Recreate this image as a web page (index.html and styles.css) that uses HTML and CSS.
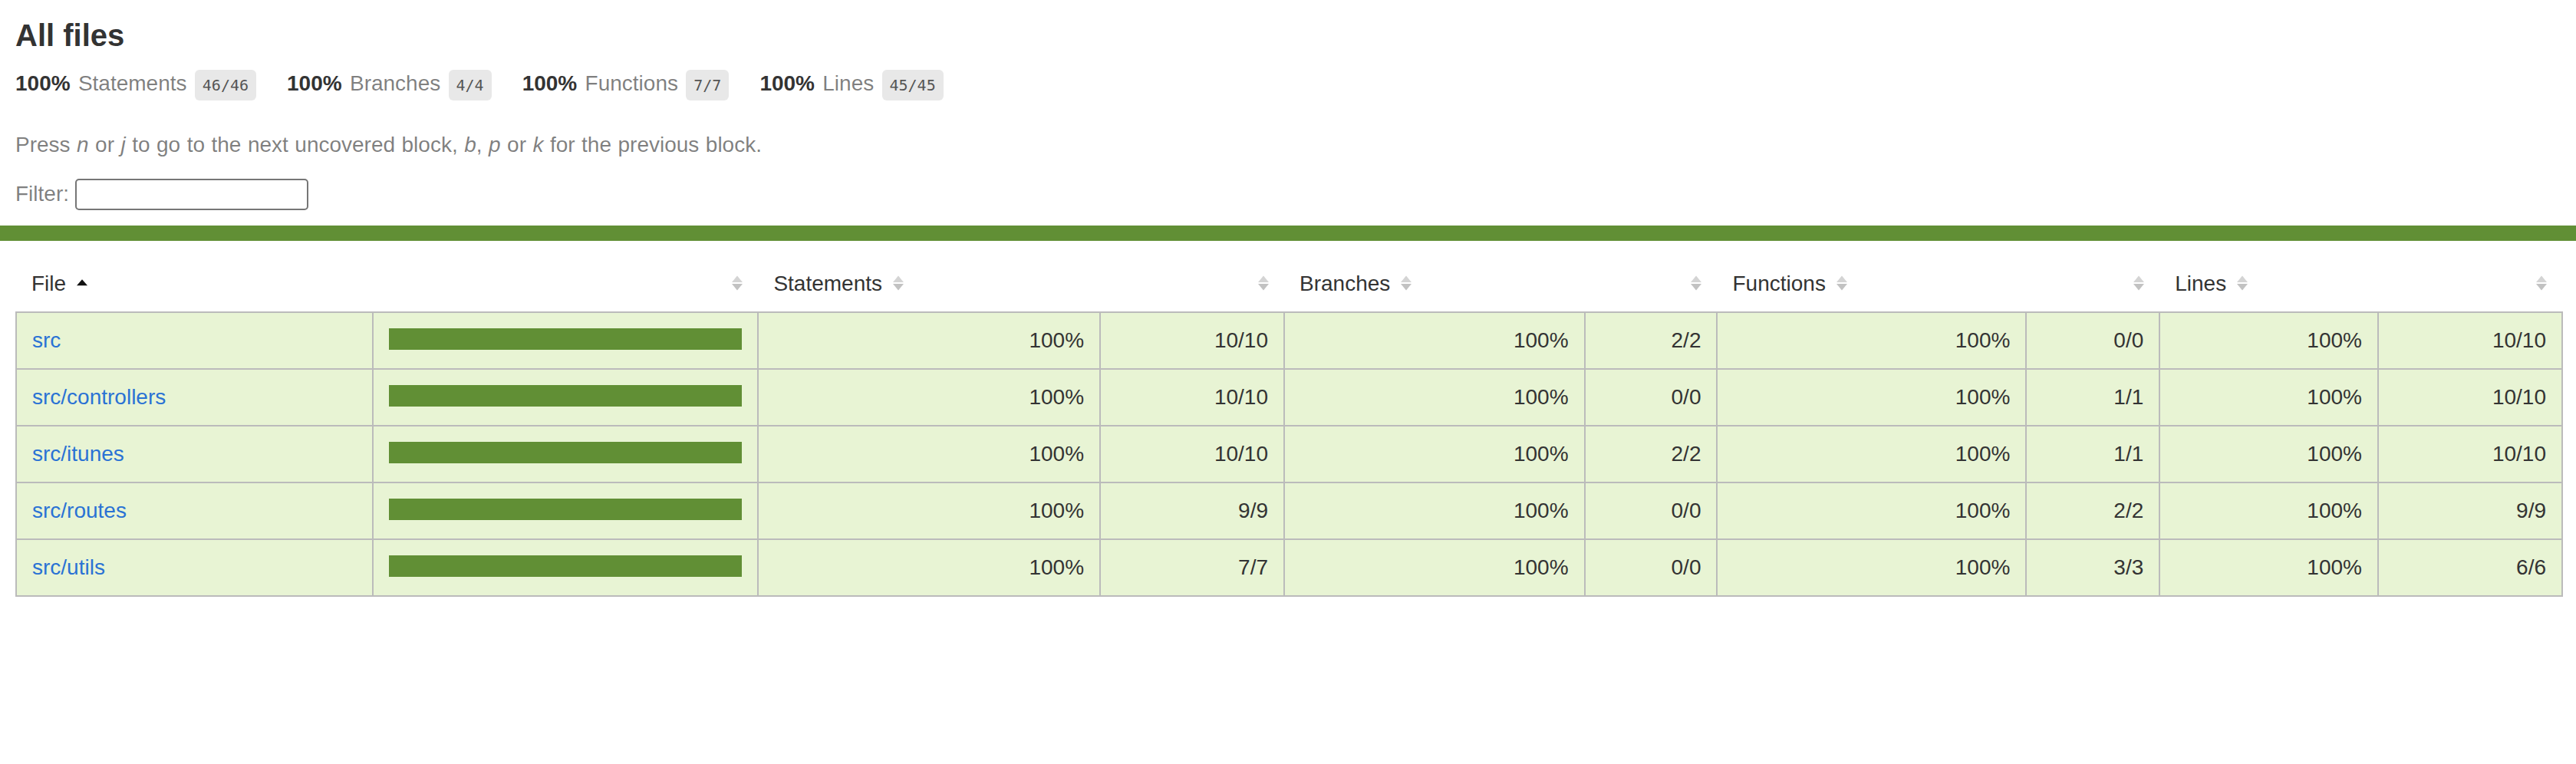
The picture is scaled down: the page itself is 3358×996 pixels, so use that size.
FILE: index.html
```html
<!DOCTYPE html>
<html lang="en">
<head>
<meta charset="utf-8">
<title>Code coverage report for All files</title>
<link rel="stylesheet" href="styles.css">
</head>
<body>
<div class="wrapper">
  <div class="pad1">
    <h1>All files</h1>
    <div class="clearfix">
      <div class="fl pad1y space-right2">
        <span class="strong">100% </span>
        <span class="quiet">Statements</span>
        <span class="fraction">46/46</span>
      </div>
      <div class="fl pad1y space-right2">
        <span class="strong">100% </span>
        <span class="quiet">Branches</span>
        <span class="fraction">4/4</span>
      </div>
      <div class="fl pad1y space-right2">
        <span class="strong">100% </span>
        <span class="quiet">Functions</span>
        <span class="fraction">7/7</span>
      </div>
      <div class="fl pad1y space-right2">
        <span class="strong">100% </span>
        <span class="quiet">Lines</span>
        <span class="fraction">45/45</span>
      </div>
    </div>
    <p class="quiet">Press <em>n</em> or <em>j</em> to go to the next uncovered block, <em>b</em>, <em>p</em> or <em>k</em> for the previous block.</p>
    <div class="quiet filter">Filter: <input class="search" type="search" id="fileSearch"></div>
  </div>
  <div class="status-line high"></div>
  <div class="pad1 table-pad">
    <table class="coverage-summary">
      <thead>
        <tr>
          <th class="file w-file">File<span class="sorter sorted"><svg viewBox="0 0 7 10" width="14" height="20"><polygon points="3.5,2.6 7,6.6 0,6.6" fill="#111"/></svg></span></th>
          <th class="pic w-pic"><span class="sorter"><svg viewBox="0 0 7 10" width="14" height="20"><polygon points="3.5,0.2 7,4.5 0,4.5" fill="#d4d4d4"/><polygon points="0,5.5 7,5.5 3.5,9.8" fill="#c2c2c2"/></svg></span></th>
          <th class="pct w-spct">Statements<span class="sorter"><svg viewBox="0 0 7 10" width="14" height="20"><polygon points="3.5,0.2 7,4.5 0,4.5" fill="#d4d4d4"/><polygon points="0,5.5 7,5.5 3.5,9.8" fill="#c2c2c2"/></svg></span></th>
          <th class="abs w-sabs"><span class="sorter"><svg viewBox="0 0 7 10" width="14" height="20"><polygon points="3.5,0.2 7,4.5 0,4.5" fill="#d4d4d4"/><polygon points="0,5.5 7,5.5 3.5,9.8" fill="#c2c2c2"/></svg></span></th>
          <th class="pct w-bpct">Branches<span class="sorter"><svg viewBox="0 0 7 10" width="14" height="20"><polygon points="3.5,0.2 7,4.5 0,4.5" fill="#d4d4d4"/><polygon points="0,5.5 7,5.5 3.5,9.8" fill="#c2c2c2"/></svg></span></th>
          <th class="abs w-babs"><span class="sorter"><svg viewBox="0 0 7 10" width="14" height="20"><polygon points="3.5,0.2 7,4.5 0,4.5" fill="#d4d4d4"/><polygon points="0,5.5 7,5.5 3.5,9.8" fill="#c2c2c2"/></svg></span></th>
          <th class="pct w-fpct">Functions<span class="sorter"><svg viewBox="0 0 7 10" width="14" height="20"><polygon points="3.5,0.2 7,4.5 0,4.5" fill="#d4d4d4"/><polygon points="0,5.5 7,5.5 3.5,9.8" fill="#c2c2c2"/></svg></span></th>
          <th class="abs w-fabs"><span class="sorter"><svg viewBox="0 0 7 10" width="14" height="20"><polygon points="3.5,0.2 7,4.5 0,4.5" fill="#d4d4d4"/><polygon points="0,5.5 7,5.5 3.5,9.8" fill="#c2c2c2"/></svg></span></th>
          <th class="pct w-lpct">Lines<span class="sorter"><svg viewBox="0 0 7 10" width="14" height="20"><polygon points="3.5,0.2 7,4.5 0,4.5" fill="#d4d4d4"/><polygon points="0,5.5 7,5.5 3.5,9.8" fill="#c2c2c2"/></svg></span></th>
          <th class="abs w-labs"><span class="sorter"><svg viewBox="0 0 7 10" width="14" height="20"><polygon points="3.5,0.2 7,4.5 0,4.5" fill="#d4d4d4"/><polygon points="0,5.5 7,5.5 3.5,9.8" fill="#c2c2c2"/></svg></span></th>
        </tr>
      </thead>
      <tbody>
        <tr>
          <td class="file high"><a href="#">src</a></td>
          <td class="pic high"><div class="chart"><div class="cover-fill cover-full" style="width: 100%"></div><div class="cover-empty" style="width: 0%"></div></div></td>
          <td class="pct high">100%</td>
          <td class="abs high">10/10</td>
          <td class="pct high">100%</td>
          <td class="abs high">2/2</td>
          <td class="pct high">100%</td>
          <td class="abs high">0/0</td>
          <td class="pct high">100%</td>
          <td class="abs high">10/10</td>
        </tr>
        <tr>
          <td class="file high"><a href="#">src/controllers</a></td>
          <td class="pic high"><div class="chart"><div class="cover-fill cover-full" style="width: 100%"></div><div class="cover-empty" style="width: 0%"></div></div></td>
          <td class="pct high">100%</td>
          <td class="abs high">10/10</td>
          <td class="pct high">100%</td>
          <td class="abs high">0/0</td>
          <td class="pct high">100%</td>
          <td class="abs high">1/1</td>
          <td class="pct high">100%</td>
          <td class="abs high">10/10</td>
        </tr>
        <tr>
          <td class="file high"><a href="#">src/itunes</a></td>
          <td class="pic high"><div class="chart"><div class="cover-fill cover-full" style="width: 100%"></div><div class="cover-empty" style="width: 0%"></div></div></td>
          <td class="pct high">100%</td>
          <td class="abs high">10/10</td>
          <td class="pct high">100%</td>
          <td class="abs high">2/2</td>
          <td class="pct high">100%</td>
          <td class="abs high">1/1</td>
          <td class="pct high">100%</td>
          <td class="abs high">10/10</td>
        </tr>
        <tr>
          <td class="file high"><a href="#">src/routes</a></td>
          <td class="pic high"><div class="chart"><div class="cover-fill cover-full" style="width: 100%"></div><div class="cover-empty" style="width: 0%"></div></div></td>
          <td class="pct high">100%</td>
          <td class="abs high">9/9</td>
          <td class="pct high">100%</td>
          <td class="abs high">0/0</td>
          <td class="pct high">100%</td>
          <td class="abs high">2/2</td>
          <td class="pct high">100%</td>
          <td class="abs high">9/9</td>
        </tr>
        <tr>
          <td class="file high"><a href="#">src/utils</a></td>
          <td class="pic high"><div class="chart"><div class="cover-fill cover-full" style="width: 100%"></div><div class="cover-empty" style="width: 0%"></div></div></td>
          <td class="pct high">100%</td>
          <td class="abs high">7/7</td>
          <td class="pct high">100%</td>
          <td class="abs high">0/0</td>
          <td class="pct high">100%</td>
          <td class="abs high">3/3</td>
          <td class="pct high">100%</td>
          <td class="abs high">6/6</td>
        </tr>
      </tbody>
    </table>
  </div>
</div>
</body>
</html>
```

FILE: styles.css
```css
*, *:after, *:before {
  box-sizing: border-box;
}
html, body {
  margin: 0;
  padding: 0;
}
body {
  font-family: "Liberation Sans", Arial, Helvetica, sans-serif;
  font-size: 28px;
  color: #333;
  background: #fff;
}
h1 {
  font-size: 40px;
  line-height: 53px;
  margin: 0;
  font-weight: bold;
}
a {
  color: #2a72d4;
  text-decoration: none;
}
.strong { font-weight: bold; }
.pad1 { padding: 20px; }
.table-pad { padding: 20px 17px 20px 20px; }
.pad1y { padding: 20px 0; }
.space-right2 { padding-right: 40px; }
.clearfix { display: block; }
.clearfix:after {
  content: '';
  display: block;
  height: 0;
  clear: both;
  visibility: hidden;
}
.fl {
  float: left;
  word-spacing: 2.5px;
}
.quiet {
  color: rgba(0, 0, 0, 0.5);
}
p.quiet {
  margin: 28px 0;
  word-spacing: 0.7px;
}
.fraction {
  font-family: "DejaVu Sans Mono", "Liberation Mono", monospace;
  font-size: 20px;
  color: #555;
  background: #e8e8e8;
  padding: 8px 10px;
  border-radius: 6px;
  vertical-align: middle;
  word-spacing: 0;
}
.filter {
  line-height: normal;
}
.search {
  font-family: "Liberation Sans", Arial, sans-serif;
  font-size: 26.67px;
  width: 304px;
  height: 41px;
  margin: 0;
  padding: 2px 4px;
  border: 2px solid #767676;
  border-radius: 5px;
  background: #fff;
  vertical-align: baseline;
}
.status-line {
  height: 20px;
}
.status-line.high {
  background: #618f35;
}

.coverage-summary {
  border-collapse: collapse;
  width: 100%;
  table-layout: fixed;
}
.coverage-summary tr {
  border-bottom: 2px solid #bbb;
}
.coverage-summary tbody {
  border: 2px solid #bbb;
}
.coverage-summary td,
.coverage-summary th {
  padding: 20px;
}
.coverage-summary td {
  border-right: 2px solid #bbb;
  vertical-align: top;
}
.coverage-summary td:last-child {
  border-right: none;
}
.coverage-summary th {
  text-align: left;
  font-weight: normal;
  white-space: nowrap;
}
.coverage-summary th.pic,
.coverage-summary th.abs,
.coverage-summary td.pct,
.coverage-summary td.abs {
  text-align: right;
}
.coverage-summary td.file {
  white-space: nowrap;
}
.coverage-summary .sorter {
  display: inline-block;
  width: 14px;
  height: 20px;
  margin-left: 14px;
}
.coverage-summary .sorter svg {
  display: block;
}
.w-file { width: 14.00%; }
.w-pic { width: 15.15%; }
.w-spct { width: 13.43%; }
.w-sabs { width: 7.23%; }
.w-bpct { width: 11.80%; }
.w-babs { width: 5.21%; }
.w-fpct { width: 12.14%; }
.w-fabs { width: 5.24%; }
.w-lpct { width: 8.58%; }
.w-labs { width: 7.23%; }

.high {
  background: #e8f4d4;
}
.chart {
  line-height: 0;
}
.high .chart {
  border: 2px solid #618f35;
}
.cover-fill,
.cover-empty {
  display: inline-block;
  height: 24px;
}
.high .cover-fill {
  background: #618f35;
}
.cover-empty {
  background: #fff;
}
```
